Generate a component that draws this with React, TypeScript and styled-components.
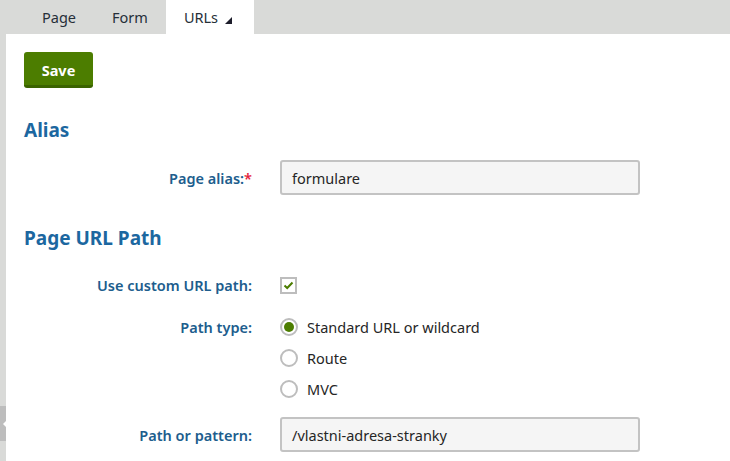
import React from "react";
import styled, { createGlobalStyle } from "styled-components";

const GlobalStyle = createGlobalStyle`
  body {
    margin: 0;
    font-family: "Noto Sans", "Open Sans", Arial, sans-serif;
    background: #d9dad8;
  }
`;

const Page = styled.div`
  width: 730px;
  height: 461px;
  display: flex;
  flex-direction: column;
  background: #d9dad8;
  overflow: hidden;
`;

const TabBar = styled.div`
  height: 34px;
  display: flex;
  padding-left: 24px;
`;

const Tab = styled.div<{ $active?: boolean }>`
  display: flex;
  align-items: center;
  gap: 7px;
  padding: 0 ${(p) => (p.$active ? "22px 0 18px" : "18px")};
  background: ${(p) => (p.$active ? "#ffffff" : "transparent")};
  color: #262f38;
  font-size: 14.5px;
`;

const Caret = styled.span`
  width: 0;
  height: 0;
  margin-top: 6px;
  border-left: 7px solid transparent;
  border-bottom: 7px solid #1d1d2b;
`;

const Body = styled.div`
  flex: 1;
  display: flex;
`;

const Strip = styled.div`
  width: 6px;
  display: flex;
  flex-direction: column;
`;

const StripHandle = styled.div`
  margin-top: 372px;
  height: 35px;
  background: #bdbdbd;
  display: flex;
  align-items: center;
  justify-content: flex-end;

  &::after {
    content: "";
    border-right: 3px solid #fff;
    border-top: 3px solid transparent;
    border-bottom: 3px solid transparent;
  }
`;

const Main = styled.div`
  flex: 1;
  background: #fff;
  padding: 18px 18px 0;
`;

const SaveButton = styled.button`
  width: 69px;
  height: 36px;
  border: none;
  border-bottom: 3px solid #3a6300;
  border-radius: 3px;
  background: #4c7d00;
  color: #fff;
  font-family: inherit;
  font-weight: 700;
  font-size: 14.5px;
  padding: 2px 0 0;
`;

const Heading = styled.h2<{ $top: number }>`
  margin: ${(p) => p.$top}px 0 0;
  color: #1c67a0;
  font-size: 19px;
  font-weight: 700;
  line-height: 24px;
`;

const Form = styled.div<{ $top: number }>`
  margin-top: ${(p) => p.$top}px;
  display: grid;
  grid-template-columns: 228px 360px;
  column-gap: 28px;
  align-items: center;
`;

const Label = styled.div<{ $top?: boolean }>`
  text-align: right;
  color: #205d8d;
  font-size: 14.5px;
  font-weight: 600;
  align-self: ${(p) => (p.$top ? "start" : "center")};
  line-height: 18px;
`;

const Required = styled.span`
  color: #e5213b;
`;

const Input = styled.div`
  height: 35px;
  box-sizing: border-box;
  border: 2px solid #c3c3c3;
  border-radius: 3px;
  background: #f5f5f5;
  padding: 0 10px;
  display: flex;
  align-items: center;
  color: #262626;
  font-size: 14.5px;
`;

const Checkbox = styled.div`
  width: 17px;
  height: 17px;
  box-sizing: border-box;
  border: 2px solid #bdbdbd;
  display: flex;
  align-items: center;
  justify-content: center;
`;

const Cell = styled.div<{ $h: number }>`
  height: ${(p) => p.$h}px;
  display: flex;
  align-items: center;
`;

const RadioList = styled.div`
  display: flex;
  flex-direction: column;
  gap: 13px;
`;

const RadioRow = styled.div`
  display: flex;
  align-items: center;
  gap: 9px;
  color: #262626;
  font-size: 14.5px;
  height: 18px;
`;

const Radio = styled.span<{ $checked?: boolean }>`
  width: 18px;
  height: 18px;
  box-sizing: border-box;
  border: 2px solid #bdbdbd;
  border-radius: 50%;
  display: flex;
  align-items: center;
  justify-content: center;

  &::after {
    content: "";
    width: 10px;
    height: 10px;
    border-radius: 50%;
    background: ${(p) => (p.$checked ? "#4c7d00" : "transparent")};
  }
`;

const Gap = styled.div<{ $h: number }>`
  grid-column: 1 / -1;
  height: ${(p) => p.$h}px;
`;

export default function App() {
  return (
    <Page>
      <GlobalStyle />
      <TabBar>
        <Tab>Page</Tab>
        <Tab>Form</Tab>
        <Tab $active>
          URLs <Caret />
        </Tab>
      </TabBar>
      <Body>
        <Strip>
          <StripHandle />
        </Strip>
        <Main>
          <SaveButton>Save</SaveButton>
          <Heading $top={30}>Alias</Heading>
          <Form $top={18}>
            <Label>
              Page alias:<Required>*</Required>
            </Label>
            <Input>formulare</Input>
          </Form>
          <Heading $top={31}>Page URL Path</Heading>
          <Form $top={25}>
            <Label>Use custom URL path:</Label>
            <Cell $h={20}>
              <Checkbox>
                <svg width="11" height="9" viewBox="0 0 11 9">
                  <path d="M1.5 4.5 L4.2 7 L9.5 1.5" fill="none" stroke="#4c7d00" strokeWidth="2" />
                </svg>
              </Checkbox>
            </Cell>
            <Gap $h={23} />
            <Label $top>Path type:</Label>
            <RadioList>
              <RadioRow>
                <Radio $checked />
                Standard URL or wildcard
              </RadioRow>
              <RadioRow>
                <Radio />
                Route
              </RadioRow>
              <RadioRow>
                <Radio />
                MVC
              </RadioRow>
            </RadioList>
            <Gap $h={19} />
            <Label>Path or pattern:</Label>
            <Input>/vlastni-adresa-stranky</Input>
          </Form>
        </Main>
      </Body>
    </Page>
  );
}
